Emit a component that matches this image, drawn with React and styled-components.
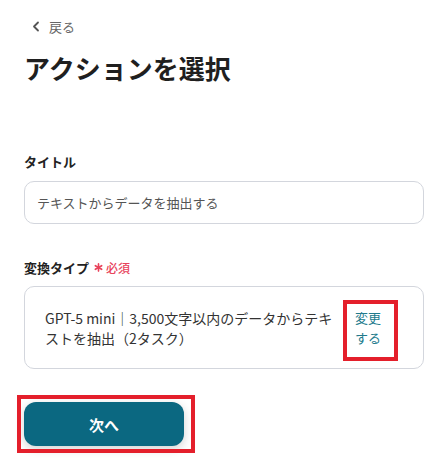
import React from 'react';
import styled, { createGlobalStyle } from 'styled-components';

const GlobalStyle = createGlobalStyle`
    html, body {
        margin: 0;
        padding: 0;
        background: #ffffff;
    }
    body {
        font-family: "Noto Sans CJK JP", "Noto Sans", sans-serif;
        color: #222;
    }
`;

const Page = styled.div`
    width: 441px;
    height: 463px;
    box-sizing: border-box;
    padding: 16px 17px 0 24px;
    overflow: hidden;
`;

const BackLink = styled.a`
    display: flex;
    align-items: center;
    gap: 9px;
    height: 20px;
    padding-left: 8px;
    font-size: 13px;
    color: #666;
    text-decoration: none;
`;

const Title = styled.h1`
    margin: 14px 0 0 0;
    font-size: 26px;
    line-height: 36px;
    font-weight: 700;
    color: #1f1f1f;
    letter-spacing: 0;
`;

const Field = styled.div`
    margin-top: ${props => props.top}px;
`;

const Label = styled.div`
    display: flex;
    align-items: center;
    gap: 5px;
    height: 20px;
    font-size: 13px;
    font-weight: 700;
    color: #222;
`;

const Required = styled.span`
    display: flex;
    align-items: center;
    gap: 3px;
    font-size: 12px;
    font-weight: 500;
    color: #e8425a;
`;

const InputBox = styled.div`
    margin-top: ${props => props.gap}px;
    height: 43px;
    box-sizing: border-box;
    border: 1px solid #d3d6dd;
    border-radius: 10px;
    display: flex;
    align-items: center;
    padding: 0 12px;
    font-size: 13px;
    color: #555;
`;

const SelectBox = styled.div`
    margin-top: 9px;
    height: 83px;
    box-sizing: border-box;
    border: 1px solid #d3d6dd;
    border-radius: 10px;
    display: flex;
    align-items: center;
    gap: 12px;
    padding: 0 40px 0 20px;
`;

const SelectText = styled.div`
    width: 300px;
    font-size: 14px;
    line-height: 20px;
    color: #333;
`;

const Marked = styled.div`
    position: relative;
    display: inline-block;
`;

const Highlight = styled.span`
    position: absolute;
    top: ${props => props.t}px;
    right: ${props => props.r}px;
    bottom: ${props => props.b}px;
    left: ${props => props.l}px;
    border: 4px solid #e41f2b;
    pointer-events: none;
`;

const ChangeLink = styled.a`
    display: block;
    width: 28px;
    font-size: 13px;
    line-height: 20px;
    color: #217a8c;
    text-decoration: none;
`;

const ButtonRow = styled.div`
    margin-top: 33px;
`;

const NextButton = styled.button`
    display: block;
    width: 160px;
    height: 44px;
    border: none;
    border-radius: 12px;
    background: #0b6881;
    color: #fff;
    font-family: inherit;
    font-size: 15px;
    font-weight: 700;
    box-shadow: 0 3px 10px rgba(0, 0, 0, 0.18);
    cursor: pointer;
`;

const Chevron = () => (
    <svg width="8" height="11" viewBox="0 0 8 11" fill="none">
        <path d="M6 1.5L2 5.5L6 9.5" stroke="#555" strokeWidth="1.8" strokeLinecap="round" strokeLinejoin="round" />
    </svg>
);

const Asterisk = () => (
    <svg width="9" height="9" viewBox="0 0 10 10" fill="none">
        <g stroke="#e8425a" strokeWidth="1.8" strokeLinecap="round">
            <path d="M5 1V9" />
            <path d="M1.5 3L8.5 7" />
            <path d="M1.5 7L8.5 3" />
        </g>
    </svg>
);

const App = () => (
    <>
        <GlobalStyle />
        <Page>
            <BackLink href="#">
                <Chevron />
                戻る
            </BackLink>
            <Title>アクションを選択</Title>

            <Field top={65}>
                <Label>タイトル</Label>
                <InputBox gap={10}>テキストからデータを抽出する</InputBox>
            </Field>

            <Field top={33}>
                <Label>
                    変換タイプ
                    <Required>
                        <Asterisk />必須
                    </Required>
                </Label>
                <SelectBox>
                    <SelectText>
                        GPT-5 mini｜3,500文字以内のデータからテキストを抽出（2タスク）
                    </SelectText>
                    <Marked>
                        <ChangeLink href="#">変更する</ChangeLink>
                        <Highlight t={-8} r={-15} b={-13} l={-12} />
                    </Marked>
                </SelectBox>
            </Field>

            <ButtonRow>
                <Marked>
                    <NextButton>次へ</NextButton>
                    <Highlight t={-7} r={-11} b={-7} l={-7} />
                </Marked>
            </ButtonRow>
        </Page>
    </>
);

export default App;
